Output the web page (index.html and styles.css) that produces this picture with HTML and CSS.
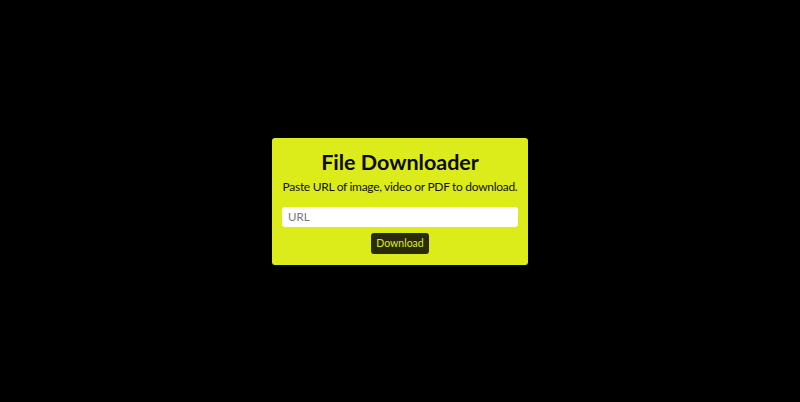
FILE: index.html
```html
<!DOCTYPE html>
<html lang="en">
<head>
<meta charset="utf-8">
<title>File Downloader</title>
<link rel="stylesheet" href="styles.css">
</head>
<body>
<main class="card">
  <h1 class="title">File Downloader</h1>
  <p class="subtitle">Paste URL of image, video or PDF to download.</p>
  <input class="url-input" type="text" placeholder="URL">
  <button class="download-btn" type="button">Download</button>
</main>
</body>
</html>
```

FILE: styles.css
```css
* { box-sizing: border-box; }
html, body { margin: 0; height: 100%; }
body {
  background: #000;
  display: flex;
  align-items: center;
  justify-content: center;
  font-family: "Lato", "Noto Sans", sans-serif;
}
.card {
  width: 256px;
  height: 127px;
  background: #dcec1a;
  border-radius: 3px;
  padding: 8px 10px 11px;
  display: flex;
  flex-direction: column;
  align-items: center;
}
.title {
  margin: 0;
  font-size: 21.5px;
  line-height: 32px;
  font-weight: 700;
  color: #0a0a00;
  white-space: nowrap;
  flex-shrink: 0;
}
.subtitle {
  margin: 0 0 12px;
  font-size: 12px;
  letter-spacing: -0.3px;
  line-height: 17px;
  color: #111;
  white-space: nowrap;
  flex-shrink: 0;
}
.url-input {
  width: 100%;
  height: 20px;
  flex-shrink: 0;
  border: none;
  border-radius: 3px;
  background: #fff;
  padding: 0 6px;
  font-family: inherit;
  font-size: 11.5px;
  outline: none;
}
.url-input::placeholder { color: #777; }
.download-btn {
  margin-top: 6px;
  height: 21px;
  flex-shrink: 0;
  padding: 0 5px;
  border: none;
  border-radius: 3px;
  background: #2a2b09;
  color: #dcec1a;
  font-family: inherit;
  font-size: 10.5px;
}
```
